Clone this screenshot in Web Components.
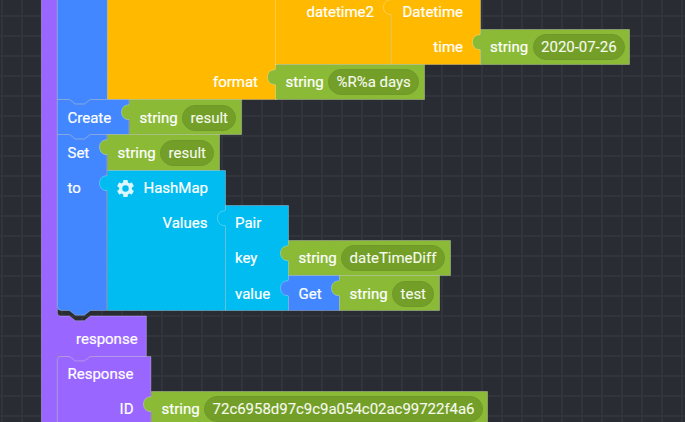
<!DOCTYPE html>
<html lang="en">
<head>
<meta charset="utf-8">
<title>Block workspace</title>
<style>
html,body{margin:0;width:685px;height:422px;overflow:hidden;background:#2a2c34}
</style>
</head>
<body>
<block-workspace>
  <code-block x="41.5" y="-20" w="16" h="460" shape="loop" color="#9966ff"><block-row slot="rows" style="--h:40px;--top:338px;--pad:34.5px"><block-label>response</block-label></block-row></code-block>

  <code-block x="57.5" y="-20" w="50" h="119" shape="stack" color="#4287ff"></code-block>
  <code-block x="107" y="-20" w="169" h="119" shape="plain" color="#ffba00"><block-row slot="rows" align="end" style="--top:84px;--end:18px"><block-label>format</block-label></block-row></code-block>
  <code-block x="275" y="-20" w="116" h="84" shape="plain" color="#ffba00"><block-row slot="rows" align="end" style="--top:14px;--end:17px"><block-label>datetime2</block-label></block-row></code-block>
  <code-block x="391" y="-6" w="89" h="70" shape="tab" color="#ffba00"><block-row slot="rows" align="end" style="--end:17px"><block-label>Datetime</block-label></block-row><block-row slot="rows" align="end" style="--end:17px"><block-label>time</block-label></block-row></code-block>
  <code-block x="480" y="29" w="149" h="35" shape="tab" color="#8aba36"><block-row slot="rows"><block-label>string</block-label><text-field>2020-07-26</text-field></block-row></code-block>
  <code-block x="275" y="64" w="149" h="35" shape="tab" color="#8aba36"><block-row slot="rows" style="--pad:10.5px"><block-label>string</block-label><text-field>%R%a days</text-field></block-row></code-block>

  <code-block x="57.5" y="99" w="71.5" h="35" shape="stack" color="#4287ff"><block-row slot="rows" style="--pt:2px"><block-label>Create</block-label></block-row></code-block>
  <code-block x="129" y="99" w="112" h="35" shape="tab" color="#8aba36"><block-row slot="rows" style="--pt:2px;--pad:10.5px"><block-label>string</block-label><text-field>result</text-field></block-row></code-block>

  <code-block x="57.5" y="134" w="49.5" h="176" shape="last" color="#4287ff"><block-row slot="rows" style="--pt:2px;--h:36px"><block-label>Set</block-label></block-row><block-row slot="rows"><block-label>to</block-label></block-row></code-block>
  <code-block x="107" y="134" w="112" h="36" shape="tab" color="#8aba36"><block-row slot="rows" style="--pt:2px;--pad:10.5px"><block-label>string</block-label><text-field>result</text-field></block-row></code-block>
  <code-block x="107" y="170" w="118" h="140" shape="tab" color="#00bcf0"><block-row slot="rows"><gear-icon></gear-icon><block-label>HashMap</block-label></block-row><block-row slot="rows" align="end" style="--end:17.5px"><block-label>Values</block-label></block-row></code-block>
  <code-block x="225" y="205" w="63" h="105" shape="tab" color="#00bcf0"><block-row slot="rows" style="--pad:10px"><block-label>Pair</block-label></block-row><block-row slot="rows" style="--pad:10px"><block-label>key</block-label></block-row><block-row slot="rows" style="--h:36px;--pt:2px;--pad:10px"><block-label>value</block-label></block-row></code-block>
  <code-block x="288" y="240" w="162" h="35" shape="tab" color="#8aba36"><block-row slot="rows" style="--pad:10.5px"><block-label>string</block-label><text-field>dateTimeDiff</text-field></block-row></code-block>
  <code-block x="288" y="275" w="51" h="35" shape="tab" color="#4287ff"><block-row slot="rows" style="--h:36px;--pt:2px;--pad:10.5px"><block-label>Get</block-label></block-row></code-block>
  <code-block x="339" y="275" w="100" h="35" shape="tab" color="#8aba36"><block-row slot="rows" style="--h:36px;--pt:2px;--pad:10.5px"><block-label>string</block-label><text-field>test</text-field></block-row></code-block>

  <code-block x="57.5" y="356" w="93.5" h="90" shape="notch" color="#9966ff"><block-row slot="rows" style="--pt:0px"><block-label>Response</block-label></block-row><block-row slot="rows" align="end" style="--end:17.5px;--pt:0px"><block-label>ID</block-label></block-row></code-block>
  <code-block x="151" y="391" w="336" h="36" shape="tab" color="#8aba36"><block-row slot="rows" style="--pad:10.5px"><block-label>string</block-label><text-field>72c6958d97c9c9a054c02ac99722f4a6</text-field></block-row></code-block>
</block-workspace>

<script>
const define = (name, html, extra) => customElements.define(name, class extends HTMLElement {
  connectedCallback() {
    if (this.shadowRoot) return;
    this.attachShadow({ mode: 'open' }).innerHTML = html;
    if (extra) extra(this, this.shadowRoot);
  }
});

define('block-workspace', `<style>
:host{display:block;position:relative;width:685px;height:422px;overflow:hidden;background-color:#2a2c34;
background-image:linear-gradient(90deg,#32343c 2px,transparent 2px),linear-gradient(#32343c 2px,transparent 2px);
background-size:20px 20px;background-position:1px 0,0 15px;
font:400 15px/18px Roboto,"Liberation Sans",sans-serif;color:#fff}
</style><slot></slot>`);

define('block-label', `<style>:host{display:block;white-space:pre;-webkit-text-stroke:.2px #fff}</style><slot></slot>`);

define('text-field', `<style>
:host{display:flex;align-items:center;box-sizing:border-box;height:26px;padding:0 7.5px;border-radius:13px;
background:#739f29;border:1px solid #6f982b;color:#f6faec;letter-spacing:-.03px;white-space:pre;-webkit-text-stroke:.1px #f6faec}
</style><slot></slot>`);

define('block-row', `<style>
:host{display:flex;align-items:center;box-sizing:border-box;gap:4.5px;height:var(--h,35px);
margin-top:var(--top,0);padding-left:var(--pad,10px);padding-right:var(--end,0);padding-top:var(--pt,1px);white-space:nowrap}
:host([align=end]){justify-content:flex-end}
</style><slot></slot>`);

define('gear-icon', `<style>:host{display:block;width:17px;height:17px;margin-right:5px}svg{display:block}</style>
<svg width="17" height="17" viewBox="2 2 20 20"><path fill="#dcf6fd" d="M19.43 12.98c.04-.32.07-.64.07-.98s-.03-.66-.07-.98l2.11-1.65c.19-.15.24-.42.12-.64l-2-3.46c-.12-.22-.39-.3-.61-.22l-2.49 1c-.52-.4-1.08-.73-1.69-.98l-.38-2.65A.49.49 0 0 0 14 2h-4c-.25 0-.46.18-.49.42l-.38 2.65c-.61.25-1.17.59-1.69.98l-2.49-1c-.23-.09-.49 0-.61.22l-2 3.46c-.13.22-.07.49.12.64l2.11 1.65c-.04.32-.07.65-.07.98s.03.66.07.98l-2.11 1.65c-.19.15-.24.42-.12.64l2 3.46c.12.22.39.3.61.22l2.49-1c.52.4 1.08.73 1.69.98l.38 2.65c.03.24.24.42.49.42h4c.25 0 .46-.18.49-.42l.38-2.65c.61-.25 1.17-.59 1.69-.98l2.49 1c.23.09.49 0 .61-.22l2-3.46c.12-.22.07-.49-.12-.64l-2.11-1.65zM12 15.8a3.8 3.8 0 1 1 0-7.6 3.8 3.8 0 0 1 0 7.6z"/></svg>`);

const NOTCH = 'H12l6 4.7h9l6 -4.7';
const BUMP = 'H33l-6 4.7h-9l-6 -4.7';
const outlines = {
  plain: (w, h) => `M0 0H${w}V${h}H0Z`,
  tab: (w, h) => `M0 0H${w}V${h}H0V20.5Q0 20 -1.5 20C-5.5 20 -8 16.5 -8 12.7S-5.5 5.5 -2 5.5Q0 5.5 0 4Z`,
  notch: (w, h) => `M0 3Q0 0 3 0${NOTCH}H${w}V${h}H0Z`,
  stack: (w, h) => `M0 0${NOTCH}H${w}V${h}${BUMP}H0Z`,
  last: (w, h) => `M0 0${NOTCH}H${w}V${h}${BUMP}H4Q0 ${h} 0 ${h - 4}Z`,
  // Left arm of a container block with its branch label below the nested stack.
  loop: () => `M0 0H16V332Q16 335.5 19 335.5H28l6 4.7h9l6 -4.7H105V376H49l-6 4.7h-9l-6 -4.7H16V460H0Z`
};

define('code-block', `<style>
:host{display:block;position:absolute}
svg{position:absolute;left:0;top:0;overflow:visible}
path{stroke:rgba(255,255,255,.27);stroke-width:1}
.rows{display:flex;flex-direction:column;position:relative}
</style><svg width="1" height="1"><path/></svg><div class="rows"><slot name="rows"></slot></div>`,
(el, root) => {
  const n = k => Number(el.getAttribute(k));
  const left = Math.floor(n('x')), rest = n('x') - left;
  el.style.left = left + 'px';
  el.style.top = n('y') + 'px';
  el.style.width = n('w') + rest + 'px';
  el.style.height = n('h') + 'px';
  root.querySelector('.rows').style.marginLeft = rest + 'px';
  const p = root.querySelector('path');
  // Centre the one-pixel stroke on the pixel grid; half-pixel blocks keep a soft left edge.
  p.setAttribute('transform', `translate(${rest ? rest - .1 : .5} .5)`);
  p.setAttribute('d', outlines[el.getAttribute('shape')](n('w'), n('h')));
  p.setAttribute('fill', el.getAttribute('color'));
});
</script>
</body>
</html>
